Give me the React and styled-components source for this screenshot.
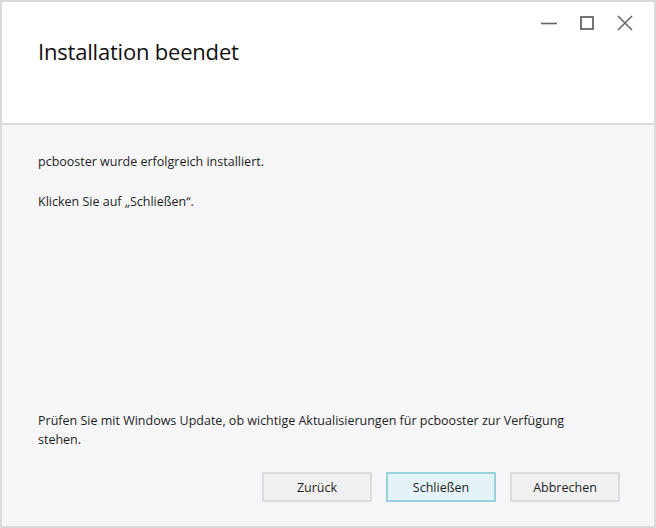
import React from 'react';
import styled, { createGlobalStyle } from 'styled-components';

const Global = createGlobalStyle`
  html, body { margin: 0; padding: 0; }
  body { font-family: "Open Sans", "Noto Sans", sans-serif; }
`;

const Window = styled.div`
  width: 656px;
  height: 528px;
  box-sizing: border-box;
  border: 2px solid #dadada;
  display: flex;
  flex-direction: column;
  background: #f6f6f8;
  color: #1a1a1a;
`;

const Header = styled.div`
  height: 121px;
  flex: none;
  background: #fff;
  border-bottom: 2px solid #dadada;
  display: flex;
  justify-content: space-between;
  align-items: flex-start;
`;

const Title = styled.h1`
  margin: 34px 0 0 36px;
  font-size: 22px;
  font-weight: 400;
  letter-spacing: -0.2px;
  color: #111;
`;

const Controls = styled.div`
  display: flex;
  align-items: center;
  margin: 10px 10px 0 0;
`;

const CtrlButton = styled.button`
  width: 38px;
  height: 22px;
  border: 0;
  padding: 0;
  background: transparent;
  display: flex;
  align-items: center;
  justify-content: center;
  color: #666;
`;

const Body = styled.div`
  flex: 1;
  display: flex;
  flex-direction: column;
  padding: 27px 34px 24px 36px;
`;

const Text = styled.p`
  margin: 0 0 21px 0;
  max-width: 540px;
  font-size: 12.5px;
  line-height: 19px;
  color: #1e1e1e;
`;

const Note = styled(Text)`
  margin-bottom: 0;
`;

const Spacer = styled.div`
  flex: 1;
`;

const Footer = styled.div`
  display: flex;
  justify-content: flex-end;
  gap: 14px;
  margin-top: 23px;
`;

const Button = styled.button`
  width: 110px;
  height: 30px;
  box-sizing: border-box;
  border: 2px solid ${(p) => (p.$primary ? '#98d2dc' : '#dcdcdc')};
  background: ${(p) => (p.$primary ? '#e4f3f7' : '#f0f0f1')};
  font-family: inherit;
  font-size: 12.5px;
  color: #1e1e1e;
  padding: 0;
`;

const App = () => (
  <>
    <Global />
    <Window>
      <Header>
        <Title>Installation beendet</Title>
        <Controls>
          <CtrlButton aria-label="Minimieren">
            <svg width="16" height="16" viewBox="0 0 16 16">
              <path d="M0 8.5h16" stroke="currentColor" strokeWidth="1.6" />
            </svg>
          </CtrlButton>
          <CtrlButton aria-label="Maximieren">
            <svg width="14" height="14" viewBox="0 0 14 14">
              <rect x="1" y="1" width="12" height="12" fill="none" stroke="currentColor" strokeWidth="1.8" />
            </svg>
          </CtrlButton>
          <CtrlButton aria-label="Schließen">
            <svg width="16" height="16" viewBox="0 0 16 16">
              <path d="M1 1l14 14M15 1L1 15" stroke="currentColor" strokeWidth="1.5" />
            </svg>
          </CtrlButton>
        </Controls>
      </Header>
      <Body>
        <Text>pcbooster wurde erfolgreich installiert.</Text>
        <Text>Klicken Sie auf „Schließen“.</Text>
        <Spacer />
        <Note>
          Prüfen Sie mit Windows Update, ob wichtige Aktualisierungen für pcbooster zur Verfügung stehen.
        </Note>
        <Footer>
          <Button>Zurück</Button>
          <Button $primary>Schließen</Button>
          <Button>Abbrechen</Button>
        </Footer>
      </Body>
    </Window>
  </>
);

export default App;
